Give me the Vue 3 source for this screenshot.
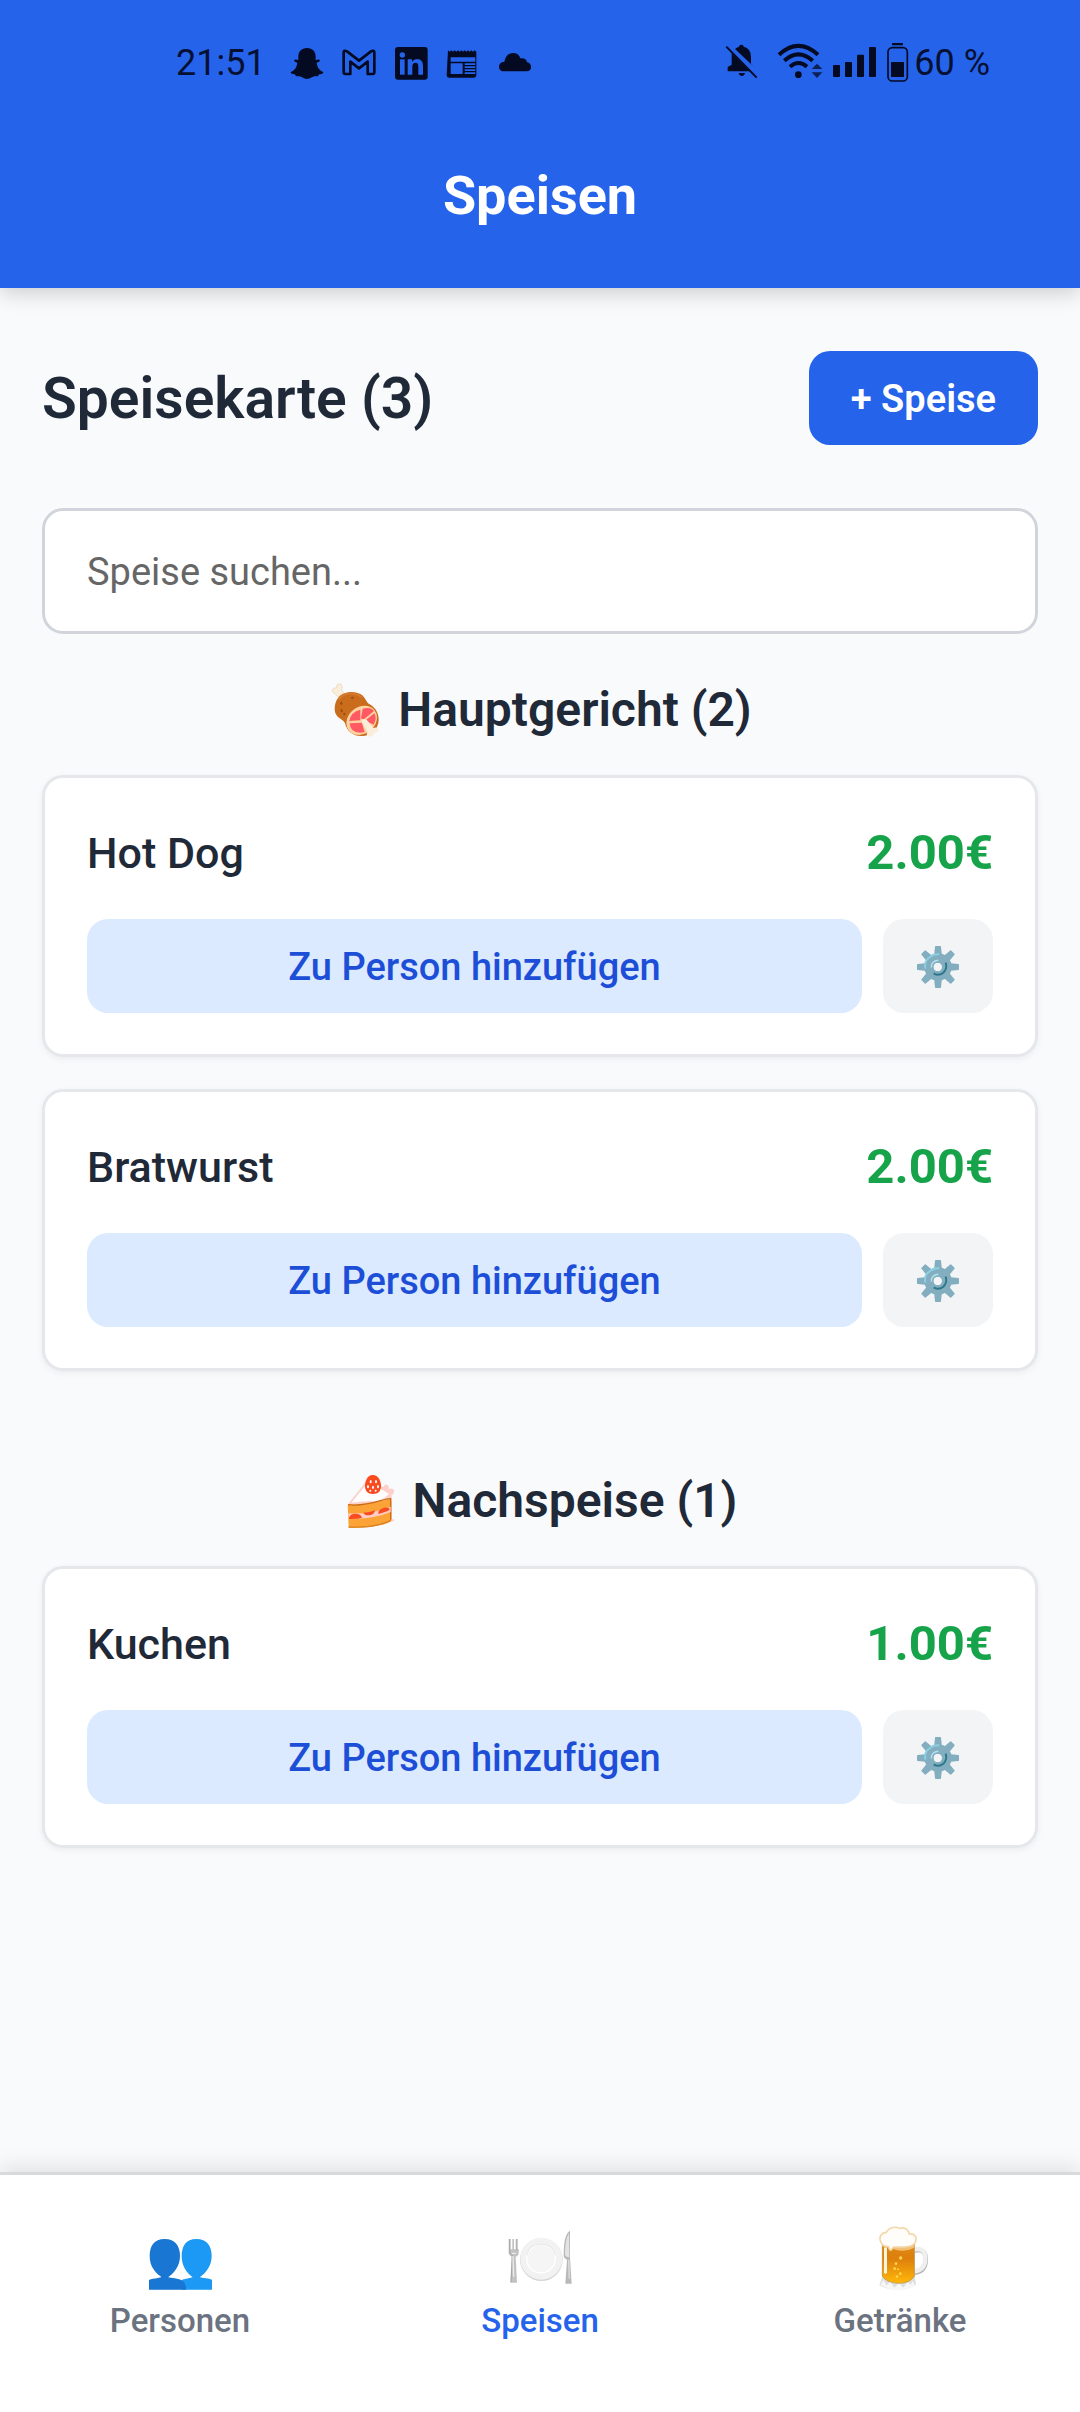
<script setup>
import { ref } from 'vue'

const query = ref('')
const sections = [
  {
    icon: 'meat',
    title: 'Hauptgericht (2)',
    items: [
      { name: 'Hot Dog', price: '2.00€' },
      { name: 'Bratwurst', price: '2.00€' },
    ],
  },
  { icon: 'cake', title: 'Nachspeise (1)', items: [{ name: 'Kuchen', price: '1.00€' }] },
]
</script>

<template>
  <div class="app">
    <header class="top">
      <div class="status">
        <div class="status-left">
          <span class="clock">21:51</span>
          <div class="notes">
            <svg viewBox="387 74 102 102"><path d="M438 80c-17 0-26 11-26 26v10c-3 1-6-2-11-1-4 2-1 6 8 9-1 13-8 23-19 28-3 3 2 6 12 7 2 3 1 6 5 6 7-1 11-1 17 3 8 6 19 7 28 0 6-4 10-4 17-3 4 0 3-3 5-6 10-1 15-4 12-7-11-5-18-15-19-28 9-3 12-7 8-9-5-1-8 2-11 1v-10c0-15-9-26-26-26z" /></svg>
            <svg viewBox="543 74 102 102"><path d="M548 94q0-9 10-4l36 28 36-28q10-5 10 4v59q0 5-5 5h-15v-37l-26 20-26-20v37h-15q-5 0-5-5z" fill="none" stroke="#040a22" stroke-width="8" stroke-linejoin="round" /></svg>
            <svg viewBox="699 74 102 102">
              <rect x="702" y="77" width="98" height="98" rx="9" />
              <g fill="#2563eb"><circle cx="724" cy="101" r="8" /><rect x="717" y="114" width="14" height="46" /><path d="M740 114h13v7q5-8 15-8 18 0 18 21v26h-14v-24q0-12-8-12-10 0-10 12v24h-14z" /></g>
            </svg>
            <svg viewBox="855 74 102 102">
              <path d="M861 87l5 4 5-4 5 4 5-4 5 4 5-4 5 4 5-4 5 4 5-4 5 4 5-4 5 4 5-4 5 4 5-4 5 4v71q0 7-7 7h-75q-7 0-7-7z" />
              <path d="M869 108h74v13h-74zM869 126h36v32h-36zM911 126h32v5h-32zM911 135h32v5h-32zM911 144h32v5h-32zM911 153h32v5h-32z" fill="#2563eb" />
            </svg>
            <svg viewBox="1011 74 102 102"><path d="M1031 150q-17 0-17-14 0-13 16-15 6-26 26-26 17 0 22 16 18-2 20 12 12 2 12 14 0 13-14 13z" /></svg>
          </div>
        </div>
        <div class="status-right">
          <svg class="bell" viewBox="78 66 102 120"><path d="M98 97l54 54H86v-13l12-7zM108 84q5-5 12-7 0-6 7-6t7 6q22 5 22 31v20l12 12zM119 156h19q-2 9-9.500 9t-9.500-9z" /><path d="M82 77l91 93" stroke="#040a22" stroke-width="6" /></svg>
          <svg class="wifi" viewBox="234 66 138 120"><g fill="none" stroke="#040a22" stroke-width="12"><path d="M240 101q58-53 117 0M256 119q42-38 85 0M273 137q25-22 51 0" /></g><circle cx="298" cy="161" r="10" /><path d="M354 128l16 16h-32zM338 154h32l-16 17z" opacity=".75" /></svg>
          <svg class="signal" viewBox="399 66 135 120"><rect x="402" y="132" width="21" height="36" rx="3" /><rect x="438" y="123" width="21" height="45" rx="3" /><rect x="474" y="101" width="21" height="67" rx="3" /><rect x="510" y="78" width="21" height="90" rx="3" /></svg>
          <svg class="battery" viewBox="561 66 69 120"><rect x="579" y="66" width="33" height="7" rx="2" /><rect x="567" y="80" width="58" height="100" rx="13" fill="none" stroke="#040a22" stroke-width="5" /><path d="M576 123h39v45h-39z" /></svg>
          <span class="percent">60 %</span>
        </div>
      </div>
      <h1>Speisen</h1>
    </header>

    <main>
      <div class="menu-head">
        <h2>Speisekarte (3)</h2>
        <button class="add" type="button">+ Speise</button>
      </div>
      <input v-model="query" class="search" type="text" placeholder="Speise suchen..." aria-label="Speise suchen" />

      <section v-for="s in sections" :key="s.title">
        <h3>
          <svg v-if="s.icon === 'meat'" viewBox="54 30 174 174">
            <path d="M83 77L72 66q-7-4-5-10 3-7 12-5 0-12 8-13 10 0 10 10 0 4-3 8l12 16z" fill="#faeedb" stroke="#e6d3b8" stroke-width="2" />
            <path d="M74 115c0-28 15-48 41-51 15-3 33 1 42 9 8 7 11 17 17 24 17 9 32 23 32 49 0 28-24 49-50 49-26 1-44-12-51-38-4-12-31-16-31-42z" fill="#c96d1d" />
            <path d="M85 86q15-21 43-18 18 1 28 12" fill="none" stroke="#d47a2a" stroke-width="6" />
            <g fill="#994812"><ellipse cx="127" cy="80" rx="4" ry="3" /><ellipse cx="94" cy="97" rx="3" ry="5" /><ellipse cx="95" cy="119" rx="3" ry="5" /><ellipse cx="103" cy="129" rx="3" ry="4" /></g>
            <ellipse cx="155" cy="148" rx="49" ry="40" transform="rotate(-38 155 148)" fill="#ffd2a2" />
            <path d="M151 116q-29 7-33 34l33-2zM158 113q25-6 34 7l-32 26-7-4zM165 149l28-22q9 15-2 34zM119 157l37-2 8 29q-43 7-45-27z" fill="#ff5963" />
            <path d="M155 153q-2-8 8-9 8 0 12 8l15 19q8-3 12 1 8 7-1 12-7 3-10 0 2 9-6 12-9 4-14-4-2-5 1-9z" fill="#faeedb" />
          </svg>
          <svg v-else viewBox="66 30 174 174">
            <path d="M82 125L137 56q26-1 49 20 6-14 16-5 3 6 1 10 17-5 16 9-1 7-7 9v72q12 2 7 5-8 5-12 0z" fill="#fdd0cc" />
            <path d="M91 122l44-54q29 2 69 27-20 22-46 22-35 1-67 5z" fill="#fff" />
            <path d="M80 128q26 2 60-4 42-6 66-13 6 2 5 14v51q-8 11-65 19-42 4-63 2z" fill="#fba336" />
            <path d="M81 128q39 5 98-12 20-6 30-6v63" fill="none" stroke="#c96e16" stroke-width="4" />
            <path d="M82 154q66 4 127-20v16q-60 24-126 19z" fill="#ffcec5" />
            <path d="M84 167q4-12 19-12 17 0 20 12-14 5-39 4zM127 152q19 0 35-7-2 13-17 15-14 1-18-8zM172 154q0-10 10-14 14-7 23-1v6q-14 7-33 11z" fill="#fa4c22" />
            <path d="M83 195q77 4 127-20" fill="none" stroke="#d98324" stroke-width="4" />
            <path d="M155 39c18 0 25 19 25 33 0 15-8 24-24 24s-24-9-24-24c0-14 7-33 23-33z" fill="#fc4a1f" />
            <g fill="#fff"><ellipse cx="149" cy="59" rx="3" ry="5" /><ellipse cx="165" cy="59" rx="3" ry="5" /><ellipse cx="141" cy="74" rx="3" ry="5" /><ellipse cx="156" cy="76" rx="3" ry="5" /><ellipse cx="171" cy="74" rx="3" ry="5" /><ellipse cx="148" cy="86" rx="3" ry="3" /><ellipse cx="164" cy="86" rx="3" ry="3" /></g>
          </svg>
          <span>{{ s.title }}</span>
        </h3>
        <article v-for="item in s.items" :key="item.name" class="card">
          <div class="row">
            <span class="name">{{ item.name }}</span>
            <span class="price">{{ item.price }}</span>
          </div>
          <div class="actions">
            <button class="assign" type="button">Zu Person hinzufügen</button>
            <button class="gear" type="button" aria-label="Einstellungen">
              <svg viewBox="168 138 132 132">
                <g fill="#82aec0">
                  <path v-for="a in [0, 45, 90, 135, 180, 225, 270, 315]" :key="a" :transform="`rotate(${a} 234 204)`" d="M222 172l3-29q0-2 2-2h14q2 0 2 2l3 29z" />
                </g>
                <circle cx="234" cy="204" r="27" fill="none" stroke="#82aec0" stroke-width="28" />
                <path d="M196 209q-4-21 10-32 14-12 32-11" fill="none" stroke="#8bd0e1" stroke-width="6" />
                <path d="M215 206q-2-20 20-22" fill="none" stroke="#b5e3ee" stroke-width="5" />
                <path d="M257 191q6 18-7 30-14 11-29 2" fill="none" stroke="#2f7889" stroke-width="6" />
                <circle cx="233" cy="204" r="15" fill="none" stroke="#83afc2" stroke-width="5" />
                <circle cx="233" cy="204" r="12" fill="#f3f4f6" />
              </svg>
            </button>
          </div>
        </article>
      </section>
    </main>

    <nav>
      <a href="#personen">
        <svg viewBox="132 195 216 198">
          <path d="M289 237c32 0 46 22 46 51 0 32-19 52-35 63 0 3 20 2 36 8v30h-90v-30l32-7c-18-13-33-34-33-64 0-29 13-51 44-51z" fill="#1b99f5" />
          <path d="M194 237c32 0 46 22 46 51 0 32-19 52-35 63 0 3 23 2 39 9 11 5 14 17 14 29H147v-29c14-6 37-6 37-9-18-13-35-31-35-63 0-29 13-51 45-51z" fill="#1976d2" />
        </svg>
        <span>Personen</span>
      </a>
      <a href="#speisen" class="active" aria-current="page">
        <svg viewBox="132 195 216 198">
          <circle cx="244" cy="299" r="64" fill="#d5d5d5" /><circle cx="244" cy="296" r="63" fill="#f2f2f2" />
          <circle cx="243" cy="296" r="43" fill="#f5f5f5" stroke="#fff" stroke-width="4" /><path d="M201 286q5-33 42-34 36 1 42 34" fill="none" stroke="#d9d9d9" stroke-width="2" />
          <path d="M148 237h4v31h5v-31h5v31h5v-31h5v31h4v10q0 9-9 12l4 78h-20l4-78q-9-4-9-12v-41z" fill="#c2c2c2" />
          <path d="M149 237v40q1 6 8 9l-4 80M171 237v35" fill="none" stroke="#989898" stroke-width="2" />
          <path d="M159 288l2 62M155 280h12" stroke="#ececec" stroke-width="4" />
          <path d="M330 212v82l5 77h-19l5-72q-11-3-10-16 0-60 19-71z" fill="#b9b9b9" />
          <path d="M327 220q-12 17-12 65 4 8 13 6z" fill="#e3e3e3" /><path d="M326 299l2 57" stroke="#dfdfdf" stroke-width="4" />
        </svg>
        <span>Speisen</span>
      </a>
      <a href="#getraenke">
        <svg viewBox="162 195 216 198">
          <defs><linearGradient id="beer" x1="0" y1="0" x2="0" y2="1"><stop offset="0" stop-color="#df8a12" /><stop offset=".4" stop-color="#dd7f0d" /><stop offset="1" stop-color="#ffb808" /></linearGradient></defs>
          <path d="M313 272q34-10 34 27 0 35-34 39" fill="none" stroke="#b5b5b5" stroke-width="14" /><path d="M313 269q33-8 33 27 0 33-33 38" fill="none" stroke="#efefef" stroke-width="13" />
          <path d="M216 250h99v105l3 19q-50 31-110 2l8-24z" fill="#dedede" />
          <path d="M211 374l9-14 9 16 12-10 12 17 14-14 13 14 12-17 11 8 4-12 8 14q-52 30-104-2z" fill="#f7f7f7" />
          <path d="M217 246h96v103q-13 21-48 21-36-2-48-22z" fill="url(#beer)" stroke="#ba8a35" stroke-width="2" />
          <path d="M217 250h96v13q-31 16-65 4l-5 7-8-11-18-4z" fill="#f2bf76" />
          <path d="M213 247c-8-14 0-29 16-30 7-14 26-19 39-12 17-5 27 5 30 17 17-2 24 10 18 25-10 16-36 14-65 14-5 0-5 12-12 8-4-3 1-11-8-10-6 0-14-3-18-12z" fill="#fffdf9" stroke="#f3d8ac" stroke-width="5" />
          <rect x="222" y="262" width="9" height="79" rx="4" fill="#fff5db" />
          <g fill="#ffd44e"><circle cx="272" cy="294" r="5" /><circle cx="258" cy="311" r="4" /><circle cx="254" cy="326" r="4" /><circle cx="264" cy="328" r="3" /><circle cx="271" cy="341" r="4" /><circle cx="261" cy="350" r="4" /></g>
        </svg>
        <span>Getränke</span>
      </a>
    </nav>
  </div>
</template>

<style>
body { margin: 0; }
</style>

<style scoped>
* { box-sizing: border-box; }
.app {
  min-height: 100vh;
  display: flex;
  flex-direction: column;
  background: #f9fafc;
  color: #1f2937;
  font-family: Roboto, "Noto Sans", sans-serif;
}
svg { display: block; flex: none; }
h1, h2, h3 { margin: 0; }
button { border: 0; padding: 2px 0 0; font: inherit; cursor: pointer; }
.top {
  padding: 2px 0 56px;
  background: #2563eb;
  box-shadow: 0 5px 20px rgba(0, 0, 0, 0.18);
}
.status {
  height: 122px;
  padding: 0 90px 0 176px;
  display: flex;
  align-items: center;
  justify-content: space-between;
  color: #051033;
  font-size: 36px;
}
.status svg { fill: #040a22; height: 40px; }
.status-left, .status-right, .notes { display: flex; align-items: center; }
.status-left { gap: 24px; }
.notes { gap: 18px; }
.status .notes svg { width: 34px; height: 34px; }
.bell { width: 34px; margin-right: 18px; }
.wifi { width: 46px; margin-right: 9px; }
.signal { width: 45px; margin-right: 9px; }
.battery { width: 23px; margin-right: 5px; }
h1 {
  color: #fff;
  font-size: 54px;
  font-weight: 700;
  line-height: 72px;
  margin-top: 36px;
  text-align: center;
}
main { flex: 1; padding: 63px 42px 0; }
.menu-head {
  display: flex;
  align-items: center;
  justify-content: space-between;
  margin-bottom: 63px;
}
h2 { font-size: 57px; font-weight: 600; }
.add {
  height: 94px;
  padding: 2px 42px 0;
  border-radius: 21px;
  background: #2563eb;
  color: #fff;
  font-size: 38px;
  font-weight: 600;
}
.search {
  display: block;
  width: 100%;
  height: 126px;
  padding: 2px 42px 0;
  border: 3px solid #d1d5db;
  border-radius: 21px;
  background: #fff;
  color: #1f2937;
  font: 38px Roboto, sans-serif;
  margin-bottom: 42px;
}
.search::placeholder { color: #666; opacity: 1; }
section {
  display: flex;
  flex-direction: column;
  margin-bottom: 64px;
}
h3 {
  display: flex;
  align-items: center;
  justify-content: center;
  gap: 12px;
  margin-bottom: 32px;
  font-size: 48px;
  font-weight: 600;
  line-height: 67px;
}
h3 svg { width: 58px; height: 58px; }
.card {
  margin-bottom: 32px;
  padding: 41px 42px;
  border: 3px solid #e5e7eb;
  border-radius: 21px;
  background: #fff;
  box-shadow: 0 2px 6px rgba(0, 0, 0, 0.06);
}
.row {
  display: flex;
  align-items: center;
  justify-content: space-between;
  margin-bottom: 32px;
  line-height: 68px;
}
.name { font-size: 43px; font-weight: 500; }
.price { color: #16a34a; font-size: 49px; font-weight: 700; }
.actions { display: flex; gap: 21px; }
.actions button { height: 94px; border-radius: 21px; }
.actions .assign {
  flex: 1;
  background: #dbeafe;
  color: #1d4ed8;
  font-size: 38px;
  font-weight: 500;
}
.actions .gear {
  width: 110px;
  display: flex;
  align-items: center;
  justify-content: center;
  background: #f3f4f6;
}
.gear svg { width: 44px; height: 44px; }
nav {
  display: flex;
  border-top: 3px solid #d8d9db;
  background: #fff;
  box-shadow: 0 -5px 20px rgba(0, 0, 0, 0.1);
  padding: 50px 0 72px;
}
nav a {
  flex: 1;
  display: flex;
  flex-direction: column;
  align-items: center;
  gap: 10px;
  color: #6b7280;
  font-size: 33px;
  font-weight: 500;
  line-height: 39px;
  text-decoration: none;
}
nav svg { width: 72px; height: 66px; }
nav .active { color: #2563eb; }
</style>
